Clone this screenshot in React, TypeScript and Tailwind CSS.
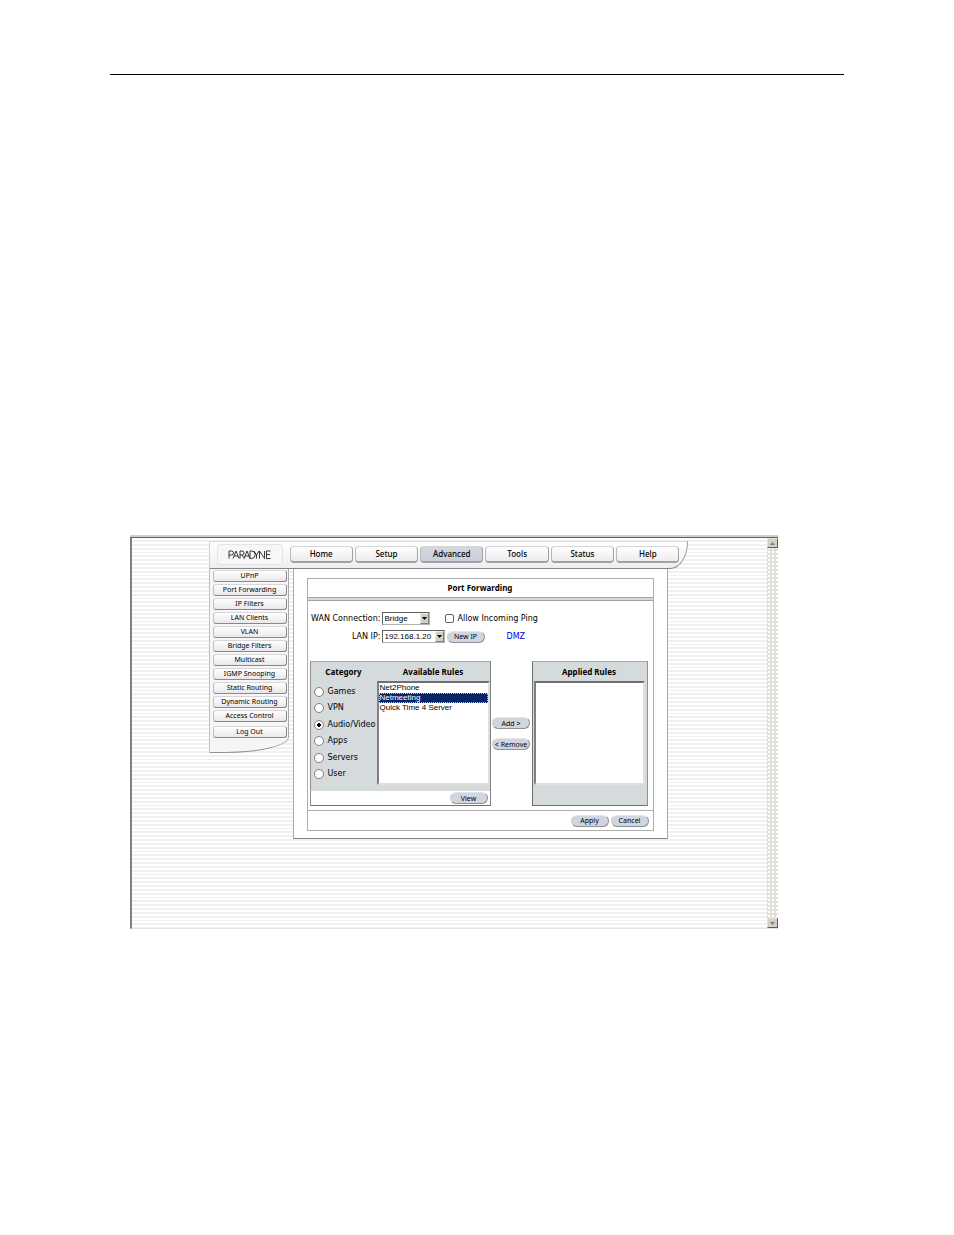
import clsx from "clsx";
import { FC, ReactNode, useState } from "react";

const navItems = ["Home", "Setup", "Advanced", "Tools", "Status", "Help"];

const sideItems = [
  "UPnP",
  "Port Forwarding",
  "IP Filters",
  "LAN Clients",
  "VLAN",
  "Bridge Filters",
  "Multicast",
  "IGMP Snooping",
  "Static Routing",
  "Dynamic Routing",
  "Access Control",
];

const categories = ["Games", "VPN", "Audio/Video", "Apps", "Servers", "User"];

const rules = ["Net2Phone", "Netmeeting", "Quick Time 4 Server"];

const listClass =
  "block h-[104px] appearance-none overflow-hidden border-2 border-t-[#707070] border-r-[#e2dfd9] border-b-[#e2dfd9] border-l-[#808080] bg-white font-['Liberation_Sans',sans-serif] text-[8px] outline-none";

const PillButton: FC<{ children: ReactNode }> = ({ children }) => (
  <button
    className="h-3 w-[38px] shrink-0 rounded-full border border-t-[#e4e5ea] border-r-[#8f9098] border-b-[#8f9098] border-l-[#c9cad2] bg-[#d3d5de] text-center text-[7px] leading-[9px] whitespace-nowrap text-black"
    type="button"
  >
    {children}
  </button>
);

const SideButton: FC<{ children: ReactNode }> = ({ children }) => (
  <button
    className="block h-3 w-full rounded-[3px] border border-t-[#d8d6d9] border-r-[#8a888b] border-b-[#8a888b] border-l-[#c2c0c3] bg-linear-to-b from-white to-[#e9e7ea] text-center text-[7px] leading-[10px] text-black"
    type="button"
  >
    {children}
  </button>
);

const Dropdown: FC<{ id: string; value: string; className: string }> = ({
  id,
  value,
  className,
}) => (
  <div className={clsx("relative h-[13px]", className)}>
    <select
      className="block h-full w-full appearance-none border border-t-[#606060] border-r-[#b5b2ac] border-b-[#b5b2ac] border-l-[#606060] bg-white pl-[2px] font-['Liberation_Sans',sans-serif] text-[8px] leading-[11px] text-black"
      defaultValue={value}
      id={id}
    >
      <option>{value}</option>
    </select>
    <span className="pointer-events-none absolute inset-y-px right-px flex w-[9px] items-center justify-center border border-t-[#eeece8] border-r-[#808080] border-b-[#808080] border-l-[#eeece8] bg-[#d4d0c8]">
      <svg className="h-[3px] w-[5px]" viewBox="0 0 5 3">
        <path d="M0 0h5L2.5 3z" fill="#000" />
      </svg>
    </span>
  </div>
);

const ScrollButton: FC<{ up?: boolean }> = ({ up }) => (
  <button
    aria-label={up ? "Scroll up" : "Scroll down"}
    className="flex h-[10px] w-full items-center justify-center border border-t-[#e6e3de] border-r-[#5a5a5a] border-b-[#5a5a5a] border-l-[#e6e3de] bg-[#d4d0c8]"
    type="button"
  >
    <svg className="h-[3px] w-[5px]" viewBox="0 0 5 3">
      <path d={up ? "M0 3h5L2.5 0z" : "M0 0h5L2.5 3z"} fill="#808080" />
    </svg>
  </button>
);

const Header: FC = () => (
  <header className="flex h-7 items-start rounded-br-[18px_27px] border border-t-[#dddbde] border-r-[#9a989b] border-b-[#858386] border-l-[#d2d0d3] bg-linear-to-b from-white via-[#f8f7f9] to-[#efedf0] px-[7px]">
    <div className="mt-[2px] mr-[7px] flex h-[21px] w-[66px] items-center justify-center rounded-[3px] border border-[#e6e4e7] bg-[#f7f6f8]">
      <svg aria-label="Paradyne" className="h-[9px] w-[43px]" role="img" viewBox="0 0 43 9">
        <g fill="none" stroke="#222" strokeWidth="0.9">
          <path d="M1 8.500V1h2.500a2 2 0 0 1 0 4H1" />
          <path d="M5 8.500L8 1l3 7.500M6 6h4" />
          <path d="M12 8.500V1h2a2 2 0 0 1 0 4h-2M14 5l2.500 3.500" />
          <path d="M16 8.500L19 1l3 7.500M17 6h4" />
          <path d="M22 1h1.500a3.500 3.500 0 0 1 0 7.500H22z" />
          <path d="M26 1l2.500 4L31 1M28.500 5v3.500" />
          <path d="M31.500 8.500V1l5 7.500V1" />
          <path d="M42.500 1h-4v7.500h4M38.500 4.500h3.500" />
        </g>
      </svg>
    </div>
    <nav className="mt-1 flex flex-1 gap-[2px]">
      {navItems.map((item) => (
        <button
          className={clsx(
            "h-[17px] min-w-0 flex-1 rounded-[4px] border border-b-2 border-t-[#d5d3d6] border-r-[#a3a1a6] border-b-[#a3a1a6] border-l-[#b9b7ba] text-center text-[8px] leading-[14px] font-medium text-black",
            item === "Advanced"
              ? "bg-linear-to-b from-[#d3d7e0] to-[#c9ced8]"
              : "bg-linear-to-b from-white to-[#edebee]"
          )}
          key={item}
          type="button"
        >
          {item}
        </button>
      ))}
    </nav>
  </header>
);

const Sidebar: FC = () => (
  <aside className="flex w-20 flex-col gap-[2px] self-start rounded-br-[64px_16px] border border-t-0 border-r-[#aaa8ab] border-b-[#949295] border-l-[#c2c0c3] bg-[#f6f5f7] pt-px pr-px pb-[14px] pl-[3px]">
    {sideItems.map((item) => (
      <SideButton key={item}>{item}</SideButton>
    ))}
    <div className="mt-[2px]">
      <SideButton>Log Out</SideButton>
    </div>
  </aside>
);

const RulesEditor: FC = () => {
  const [category, setCategory] = useState("Audio/Video");
  const [rule, setRule] = useState("Netmeeting");

  return (
    <div className="flex pr-[5px] pl-[2px] font-['DejaVu_Sans',sans-serif]">
      <div className="w-[181px] border border-t-[#aaaaaa] border-r-[#808080] border-b-[#707070] border-l-[#909090]">
        <div className="flex h-[129px] bg-[#d5dadc]">
          <fieldset className="w-[66px]">
            <legend className="h-[22px] w-full text-center font-['Noto_Sans',sans-serif] text-[8px] leading-5 font-bold">
              Category
            </legend>
            <div className="flex h-[98px] flex-col justify-between">
              {categories.map((item) => (
                <label
                  className="flex h-4 items-center gap-1 pl-[3px] text-[8px] whitespace-nowrap"
                  key={item}
                >
                  <input
                    checked={category === item}
                    className="m-0 h-[10px] w-[10px] shrink-0 appearance-none rounded-full border border-[#808080] bg-white checked:bg-[radial-gradient(circle,#000_0_2px,#fff_2px)]"
                    name="category"
                    onChange={() => setCategory(item)}
                    type="radio"
                  />
                  {item}
                </label>
              ))}
            </div>
          </fieldset>
          <div className="flex-1">
            <label
              className="block h-[19px] text-center font-['Noto_Sans',sans-serif] text-[8px] leading-5 font-bold"
              htmlFor="available"
            >
              Available Rules
            </label>
            <select
              className={clsx(listClass, "w-full")}
              id="available"
              onChange={(event) => setRule(event.target.value)}
              size={10}
              value={rule}
            >
              {rules.map((item) => (
                <option
                  className="h-[10px] min-h-0 p-0 pl-px leading-[10px] text-black checked:bg-[linear-gradient(#0a246a,#0a246a)] checked:[-webkit-text-fill-color:#fff] checked:outline checked:-outline-offset-1 checked:outline-dotted checked:outline-[#d8c878]"
                  key={item}
                >
                  {item}
                </option>
              ))}
            </select>
          </div>
        </div>
        <div className="flex h-[14px] items-center justify-end bg-white pr-[2px] font-['Noto_Sans',sans-serif]">
          <PillButton>View</PillButton>
        </div>
      </div>
      <div className="flex flex-1 flex-col items-center gap-[9px] pt-14 font-['Noto_Sans',sans-serif]">
        <PillButton>Add &gt;</PillButton>
        <PillButton>&lt; Remove</PillButton>
      </div>
      <div className="w-[116px] border border-t-[#aaaaaa] border-r-[#909090] border-b-[#707070] border-l-[#707070] bg-[#d5dadc] pr-[2px] pl-px">
        <label
          className="block h-[19px] text-center font-['Noto_Sans',sans-serif] text-[8px] leading-5 font-bold"
          htmlFor="applied"
        >
          Applied Rules
        </label>
        <select className={clsx(listClass, "w-full")} id="applied" size={10} />
      </div>
    </div>
  );
};

const PortForwarding: FC = () => (
  <main className="flex-1 border border-t-0 border-r-[#aaaaaa] border-b-[#858585] border-l-[#aaaaaa] bg-white px-[13px] pt-[9px] pb-[7px]">
    <form className="border border-[#aeaeae]">
      <h1 className="h-[18px] text-center text-[8px] leading-[18px] font-bold">Port Forwarding</h1>
      <div className="h-1 border-y border-[#9fa5a8] bg-[#d5dadc]" />
      <div className="flex flex-col gap-[5px] pt-[11px] pb-[18px] font-['DejaVu_Sans',sans-serif] text-[8px] leading-[13px]">
        <div className="flex items-center">
          <label className="w-[73px] text-right whitespace-nowrap" htmlFor="wan">
            WAN Connection:
          </label>
          <Dropdown className="ml-px w-12" id="wan" value="Bridge" />
          <label className="ml-[15px] flex items-center gap-1 whitespace-nowrap">
            <input
              className="m-0 h-[9px] w-[9px] appearance-none rounded-[2px] border border-[#606060] bg-white checked:bg-[#0a246a]"
              type="checkbox"
            />
            Allow Incoming Ping
          </label>
        </div>
        <div className="flex h-[13px] items-center">
          <label className="w-[73px] text-right whitespace-nowrap" htmlFor="lan">
            LAN IP:
          </label>
          <Dropdown className="ml-px w-[63px]" id="lan" value="192.168.1.20" />
          <div className="ml-[2px] flex font-['Noto_Sans',sans-serif]">
            <PillButton>New IP</PillButton>
          </div>
          <a className="ml-[22px] text-[#0000dd]" href="#dmz">
            DMZ
          </a>
        </div>
      </div>
      <RulesEditor />
      <div className="mt-1 flex h-5 items-center justify-end gap-[2px] border-t border-[#aeaeae] pr-1">
        <PillButton>Apply</PillButton>
        <PillButton>Cancel</PillButton>
      </div>
    </form>
  </main>
);

const Browser: FC = () => (
  <div className="mr-[66px] ml-5 border-t-2 border-t-[#d4d0c8]">
    <div className="flex h-[392px] border-t border-b border-l-2 border-t-[#606060] border-b-[#e6e3de] border-l-[#808080]">
      {/* six scan lines for every 23px */}
      <div className="flex-1 bg-[linear-gradient(#fff_0_2px,#f2eff3_2px_4px,#fff_4px_6px,#f2eff3_6px_8px,#fff_8px_10px,#f2eff3_10px_12px,#fff_12px_14px,#f2eff3_14px_15px,#fff_15px_17px,#f2eff3_17px_19px,#fff_19px_21px,#f2eff3_21px_23px)] bg-[length:100%_23px] pt-[3px] pr-[3px]">
        <div className="mx-auto w-[479px]">
          <Header />
          <div className="mr-5 flex items-start gap-1">
            <Sidebar />
            <PortForwarding />
          </div>
        </div>
      </div>
      <div className="flex w-[11px] flex-col justify-between bg-[#e2e0da] bg-[radial-gradient(#fff_1px,transparent_1px)] bg-[length:4px_4px]">
        <ScrollButton up />
        <ScrollButton />
      </div>
    </div>
  </div>
);

export default function App() {
  return (
    <div className="min-h-screen bg-white px-[110px] pt-[74px] font-['Noto_Sans',sans-serif] text-black">
      <hr className="mb-[460px] border-t border-black" />
      <Browser />
    </div>
  );
}
